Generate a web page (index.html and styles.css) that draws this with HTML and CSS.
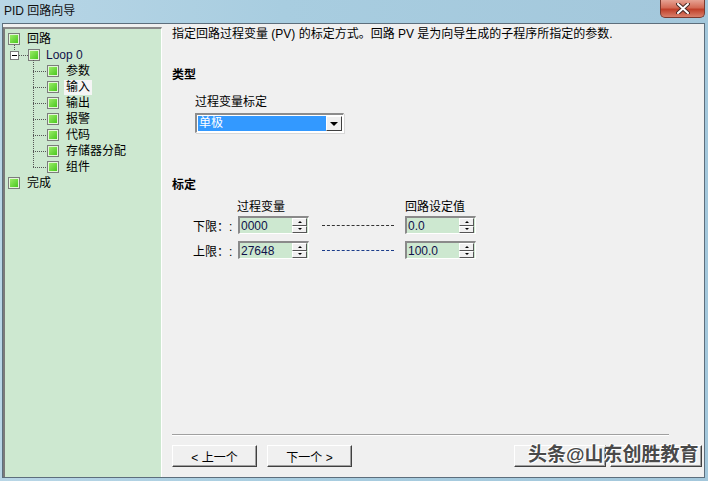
FILE: index.html
```html
<!DOCTYPE html>
<html lang="zh">
<head>
  <meta charset="UTF-8">
  <title>PID 回路向导</title>
  <link rel="stylesheet" href="styles.css">
</head>
<body>
  <div class="titlebar">
    <span class="title">PID 回路向导</span>
    <div class="close">
      <svg width="14" height="11" viewBox="0 0 14 11">
        <path d="M2 1 L12 10 M12 1 L2 10" stroke="#4a2a26" stroke-width="4" stroke-linecap="round"/>
        <path d="M2 1 L12 10 M12 1 L2 10" stroke="#fff" stroke-width="2" stroke-linecap="round"/>
      </svg>
    </div>
  </div>

  <div class="frame">
    <div class="window">
      <div class="tree">
        <div class="row root"><span class="box"></span><span class="label">回路</span></div>
        <div class="row loop">
          <span class="minus"></span><span class="hline"></span><span class="box"></span><span class="label navy">Loop 0</span>
        </div>
        <div class="children">
          <div class="row child"><span class="box"></span><span class="label">参数</span></div>
          <div class="row child"><span class="box"></span><span class="label selected">输入</span></div>
          <div class="row child"><span class="box"></span><span class="label">输出</span></div>
          <div class="row child"><span class="box"></span><span class="label">报警</span></div>
          <div class="row child"><span class="box"></span><span class="label">代码</span></div>
          <div class="row child"><span class="box"></span><span class="label">存储器分配</span></div>
          <div class="row child"><span class="box"></span><span class="label">组件</span></div>
        </div>
        <div class="row root"><span class="box"></span><span class="label">完成</span></div>
      </div>

      <div class="panel">
        <p class="desc">指定回路过程变量 (PV) 的标定方式。回路 PV 是为向导生成的子程序所指定的参数.</p>

        <h2 class="section">类型</h2>
        <div class="field">
          <div class="field-label">过程变量标定</div>
          <div class="combo">
            <span class="combo-value">单极</span>
            <span class="combo-btn"><span class="arrow"></span></span>
          </div>
        </div>

        <h2 class="section scale-title">标定</h2>
        <div class="scale">
          <div class="scale-row heads">
            <span></span>
            <span class="col-head">过程变量</span>
            <span></span>
            <span class="col-head">回路设定值</span>
          </div>
          <div class="scale-row">
            <span class="row-label">下限：:</span>
            <div class="spin"><span class="spin-val">0000</span><span class="spin-btns"><i class="up"></i><i class="down"></i></span></div>
            <span class="dash"></span>
            <div class="spin"><span class="spin-val">0.0</span><span class="spin-btns"><i class="up"></i><i class="down"></i></span></div>
          </div>
          <div class="scale-row">
            <span class="row-label">上限：:</span>
            <div class="spin"><span class="spin-val">27648</span><span class="spin-btns"><i class="up"></i><i class="down"></i></span></div>
            <span class="dash blue"></span>
            <div class="spin"><span class="spin-val">100.0</span><span class="spin-btns"><i class="up"></i><i class="down"></i></span></div>
          </div>
        </div>

        <div class="footer">
          <div class="separator"></div>
          <div class="buttons">
            <button class="btn">&lt; 上一个</button>
            <button class="btn">下一个 &gt;</button>
            <div class="right-btns">
              <button class="btn wide"></button>
              <button class="btn wide"></button>
              <span class="watermark">头条@山东创胜教育</span>
            </div>
          </div>
        </div>
      </div>
    </div>
  </div>
</body>
</html>
```

FILE: styles.css
```css
* {
  box-sizing: border-box;
}

body {
  margin: 0;
  width: 708px;
  height: 481px;
  overflow: hidden;
  font-family: 'Liberation Sans', 'Noto Sans CJK SC', sans-serif;
  font-size: 12px;
  color: #000;
  background: linear-gradient(90deg, #b8d6e6 0%, #a8cde0 40%, #a3c7db 100%);
}

.titlebar {
  height: 23px;
  display: flex;
  align-items: flex-start;
  justify-content: space-between;
  padding-left: 4px;
}

.title {
  line-height: 22px;
  font-size: 12px;
  color: #111;
}

.close {
  width: 45px;
  height: 18px;
  margin-right: 3px;
  border: 1px solid #7b3a2f;
  border-top: none;
  border-radius: 0 0 5px 5px;
  background: linear-gradient(#e6a293 0%, #d46a55 45%, #c0402a 55%, #d9806b 100%);
  display: flex;
  justify-content: center;
  align-items: center;
}

.frame {
  height: 458px;
  padding: 0 3px 3px 2px;
}

.window {
  height: 100%;
  border: 1px solid #5d6e7c;
  background: #f0f0f0;
  display: flex;
  padding-top: 3px;
}

/* tree on the left */
.tree {
  width: 159px;
  background: #cde8d0;
  border-top: 2px solid #8a8a8a;
  border-left: 2px solid #7a7a7a;
  border-right: 1px solid #fff;
  padding: 2px 0 0 3px;
}

.row {
  height: 16px;
  display: flex;
  align-items: center;
  position: relative;
}

.box {
  width: 12px;
  height: 12px;
  border: 1px solid #7c7c7c;
  background: linear-gradient(135deg, #a4f070, #3fc416);
  box-shadow: inset 0 0 0 1px #e3f7d8;
  flex-shrink: 0;
}

.label {
  margin-left: 7px;
  line-height: 15px;
  white-space: nowrap;
}

.navy {
  color: #12124a;
  margin-left: 6px;
}

.selected {
  background: #f5f5f5;
  margin-left: 5px;
  padding: 0 2px;
}

.root + .loop::before {
  content: "";
  position: absolute;
  left: 6px;
  top: -2px;
  height: 5px;
  border-left: 1px dotted #555;
}

.loop {
  padding-left: 2px;
}

.minus {
  width: 9px;
  height: 9px;
  border: 1px solid #7c7c7c;
  background: #fff;
  position: relative;
}

.minus::after {
  content: "";
  position: absolute;
  left: 1px;
  top: 3px;
  width: 5px;
  border-top: 1px solid #000;
}

.hline {
  width: 9px;
  border-top: 1px dotted #555;
}

.children {
  position: relative;
  padding-left: 39px;
}

.children::before {
  content: "";
  position: absolute;
  left: 25px;
  top: -3px;
  bottom: 8px;
  border-left: 1px dotted #555;
}

.child::before {
  content: "";
  position: absolute;
  left: -14px;
  width: 13px;
  border-top: 1px dotted #555;
}

/* right panel */
.panel {
  flex: 1;
  display: flex;
  flex-direction: column;
  padding: 0 35px 10px 10px;
  margin-top: -3px;
}

.desc {
  margin: 2px 0 0;
  line-height: 16px;
  white-space: nowrap;
}

.section {
  margin: 25px 0 0;
  font-size: 12px;
  font-weight: bold;
  line-height: 16px;
}

.field {
  padding-left: 23px;
  margin-top: 11px;
}

.field-label {
  line-height: 16px;
}

.combo {
  margin-top: 3px;
  width: 149px;
  height: 20px;
  display: flex;
  background: #fff;
  border-top: 2px solid #8c8c8c;
  border-left: 2px solid #8c8c8c;
  border-bottom: 1px solid #fff;
  border-right: 1px solid #fff;
  box-shadow: 1px 1px 0 #d8d8d8;
  padding: 1px;
}

.combo-value {
  flex: 1;
  background: #3399ff;
  color: #fff;
  line-height: 15px;
  padding-left: 1px;
}

.combo-btn {
  width: 16px;
  background: #f0f0f0;
  border-top: 1px solid #fff;
  border-left: 1px solid #fff;
  border-right: 1px solid #404040;
  border-bottom: 1px solid #404040;
  display: flex;
  justify-content: center;
  align-items: center;
}

.arrow {
  border-left: 4px solid transparent;
  border-right: 4px solid transparent;
  border-top: 4px solid #000;
}

.scale-title {
  margin-top: 44px;
}

.scale {
  margin: 6px 0 0 21px;
  display: flex;
  flex-direction: column;
  gap: 7px;
}

.scale-row {
  display: grid;
  grid-template-columns: 45px 71px 96px 71px;
  height: 18px;
  align-items: center;
}

.scale-row.heads {
  height: 16px;
  margin-bottom: -6px;
}

.col-head {
  line-height: 16px;
  white-space: nowrap;
}

.heads .col-head:nth-child(2) {
  margin-left: -1px;
}

.row-label {
  white-space: nowrap;
}

.spin {
  height: 18px;
  background: #cde8d0;
  border-top: 2px solid #8a8a8a;
  border-left: 2px solid #8a8a8a;
  border-bottom: 1px solid #fff;
  border-right: 1px solid #fff;
  display: flex;
  align-items: center;
  padding-left: 1px;
}

.spin-val {
  flex: 1;
  color: #10104a;
  font-size: 12px;
}

.spin-btns {
  width: 15px;
  height: 15px;
  margin-right: 1px;
  display: flex;
  flex-direction: column;
}

.spin-btns i {
  flex: 1;
  background: #f0f0f0;
  border-top: 1px solid #fff;
  border-left: 1px solid #fff;
  border-right: 1px solid #555;
  border-bottom: 1px solid #555;
  display: flex;
  justify-content: center;
  align-items: center;
}

.spin-btns i::after {
  content: "";
  border-left: 2px solid transparent;
  border-right: 2px solid transparent;
}

.spin-btns .up::after {
  border-bottom: 2px solid #000;
}

.spin-btns .down::after {
  border-top: 2px solid #000;
}

.dash {
  margin: 0 11px 0 13px;
  border-top: 1px dashed #333;
  height: 0;
}

.dash.blue {
  border-top-color: #1a3c8a;
}

.footer {
  margin-top: auto;
}

.separator {
  border-top: 1px solid #a0a0a0;
  border-bottom: 1px solid #fff;
}

.buttons {
  display: flex;
  gap: 10px;
  margin-top: 9px;
}

.btn {
  width: 85px;
  height: 22px;
  font-family: 'Liberation Sans', 'Noto Sans CJK SC', sans-serif;
  font-size: 12px;
  background: #f0f0f0;
  border: none;
  border-top: 1px solid #fff;
  border-left: 1px solid #fff;
  border-right: 1px solid #404040;
  border-bottom: 1px solid #404040;
  box-shadow: inset -1px -1px 0 #a0a0a0;
  padding: 0;
  color: #000;
}

.right-btns {
  margin-left: auto;
  margin-right: -33px;
  display: flex;
  gap: 4px;
  position: relative;
}

.btn.wide {
  width: 92px;
}

.watermark {
  position: absolute;
  left: 14px;
  top: -3px;
  font-size: 19px;
  line-height: 26px;
  font-weight: bold;
  color: #4a4a4a;
  white-space: nowrap;
  text-shadow: 1px 1px 0 #fff, -1px -1px 0 #fff;
}
```
